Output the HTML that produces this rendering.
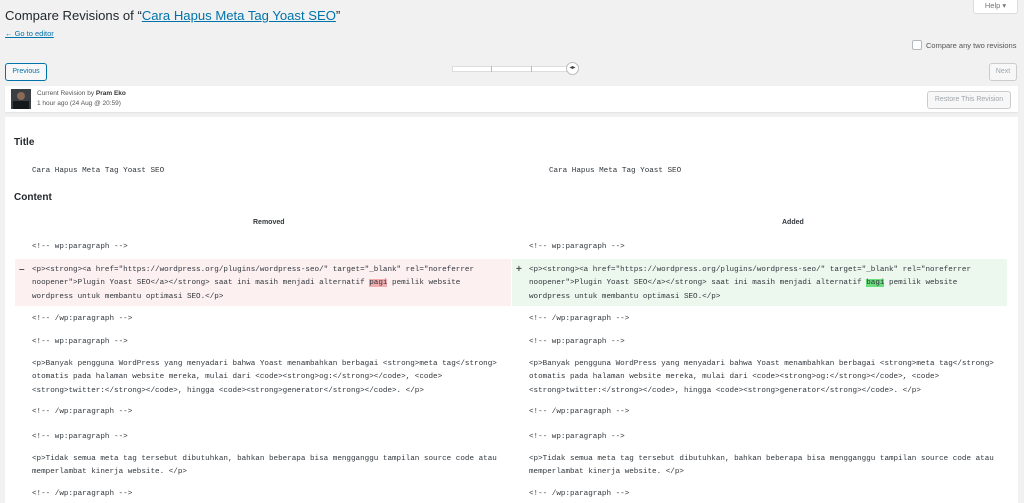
<!DOCTYPE html>
<html><head><meta charset="utf-8"><style>
*{margin:0;padding:0;box-sizing:border-box}
body{width:1024px;height:503px;overflow:hidden;background:#f1f1f1;font-family:"Liberation Sans",sans-serif;color:#23282d;position:relative}
.a{position:absolute;white-space:nowrap}
.btn{position:absolute;border:1px solid #ccc;background:#f7f7f7;border-radius:3px;font-size:7px;color:#a0a5aa;text-align:center}
.code{position:absolute;font-family:"Liberation Mono",monospace;font-size:7.6px;line-height:13.3px;color:#32373c;white-space:pre;margin-top:2px}
.del{background:#fcf0f1}
.ins{background:#ecf7ee}
.hd{background:#f1adad}
.hi{background:#68de7c}
</style></head><body>
<div class="a" style="left:5px;top:8px;font-size:13.1px;color:#23282d">Compare Revisions of “<span style="color:#0073aa;text-decoration:underline">Cara Hapus Meta Tag Yoast SEO</span>”</div>
<div class="a" style="left:5px;top:29px;font-size:7.5px;color:#0073aa;text-decoration:underline">← Go to editor</div>
<div class="a" style="left:973px;top:-2px;width:45px;height:16px;background:#fff;border:1px solid #ddd;border-top:none;border-radius:0 0 3px 3px;font-size:7.5px;color:#72777c;text-align:center;line-height:15px">Help ▾</div>
<div class="a" style="left:912px;top:40px;width:10px;height:10px;border:1px solid #b4b9be;border-radius:2px;background:#fff"></div>
<div class="a" style="left:926px;top:41px;font-size:7.5px;color:#555">Compare any two revisions</div>
<div class="btn" style="left:5px;top:63px;width:42px;height:18px;border-color:#0073aa;color:#0073aa;line-height:16px">Previous</div>
<div class="a" style="left:452px;top:66px;width:118px;height:6px;background:#fff;border:1px solid #ddd"></div>
<div class="a" style="left:491px;top:66px;width:1px;height:6px;background:#bbb"></div>
<div class="a" style="left:531px;top:66px;width:1px;height:6px;background:#bbb"></div>
<div class="a" style="left:566px;top:62px;width:13px;height:13px;border:1px solid #bbb;border-radius:50%;background:#fff;font-size:6px;line-height:11px;text-align:center;color:#444">◂▸</div>
<div class="btn" style="left:989px;top:63px;width:28px;height:18px;line-height:16px">Next</div>
<div class="a" style="left:5px;top:86px;width:1013px;height:26px;background:#fff;box-shadow:0 1px 1px rgba(0,0,0,.06)"></div>
<div class="a" style="left:11px;top:89px;width:20px;height:20px;background:#3a3f44"><div style="position:absolute;left:6px;top:3px;width:8px;height:8px;border-radius:50%;background:#8a6a58"></div><div style="position:absolute;left:2px;top:12px;width:16px;height:8px;background:#15181b"></div></div>
<div class="a" style="left:37px;top:90px;font-size:6.5px;color:#555">Current Revision by <b style="color:#333">Pram Eko</b></div>
<div class="a" style="left:37px;top:100px;font-size:6.5px;color:#555">1 hour ago (24 Aug @ 20:59)</div>
<div class="btn" style="left:927px;top:91px;width:84px;height:18px;line-height:16px">Restore This Revision</div>
<div class="a" style="left:5px;top:117px;width:1013px;height:386px;background:#fff"></div>
<div class="a" style="left:14px;top:137px;font-size:10px;font-weight:bold;color:#23282d">Title</div>
<div class="code" style="left:32px;top:163px">Cara Hapus Meta Tag Yoast SEO</div>
<div class="code" style="left:549px;top:163px">Cara Hapus Meta Tag Yoast SEO</div>
<div class="a" style="left:14px;top:192px;font-size:10px;font-weight:bold;color:#23282d">Content</div>
<div class="a" style="left:253px;top:219px;font-size:7px;font-weight:bold;color:#32373c">Removed</div>
<div class="a" style="left:782px;top:219px;font-size:7px;font-weight:bold;color:#32373c">Added</div>
<div class="del a" style="left:15px;top:259px;width:496px;height:47px"></div>
<div class="ins a" style="left:512px;top:259px;width:495px;height:47px"></div>
<div class="a" style="left:19px;top:264px;font-size:10px;font-weight:bold;color:#555">–</div>
<div class="a" style="left:516px;top:264px;font-size:10px;font-weight:bold;color:#555">+</div>
<div class="code" style="left:32px;top:239px">&lt;!-- wp:paragraph --&gt;</div>
<div class="code" style="left:529px;top:239px">&lt;!-- wp:paragraph --&gt;</div>
<div class="code" style="left:32px;top:262px">&lt;p&gt;&lt;strong&gt;&lt;a href="https://wordpress.org/plugins/wordpress-seo/" target="_blank" rel="noreferrer
noopener"&gt;Plugin Yoast SEO&lt;/a&gt;&lt;/strong&gt; saat ini masih menjadi alternatif <span class="hd">pagi</span> pemilik website
wordpress untuk membantu optimasi SEO.&lt;/p&gt;</div>
<div class="code" style="left:529px;top:262px">&lt;p&gt;&lt;strong&gt;&lt;a href="https://wordpress.org/plugins/wordpress-seo/" target="_blank" rel="noreferrer
noopener"&gt;Plugin Yoast SEO&lt;/a&gt;&lt;/strong&gt; saat ini masih menjadi alternatif <span class="hi">bagi</span> pemilik website
wordpress untuk membantu optimasi SEO.&lt;/p&gt;</div>
<div class="code" style="left:32px;top:311px">&lt;!-- /wp:paragraph --&gt;</div>
<div class="code" style="left:529px;top:311px">&lt;!-- /wp:paragraph --&gt;</div>
<div class="code" style="left:32px;top:334px">&lt;!-- wp:paragraph --&gt;</div>
<div class="code" style="left:529px;top:334px">&lt;!-- wp:paragraph --&gt;</div>
<div class="code" style="left:32px;top:356px">&lt;p&gt;Banyak pengguna WordPress yang menyadari bahwa Yoast menambahkan berbagai &lt;strong&gt;meta tag&lt;/strong&gt;
otomatis pada halaman website mereka, mulai dari &lt;code&gt;&lt;strong&gt;og:&lt;/strong&gt;&lt;/code&gt;, &lt;code&gt;
&lt;strong&gt;twitter:&lt;/strong&gt;&lt;/code&gt;, hingga &lt;code&gt;&lt;strong&gt;generator&lt;/strong&gt;&lt;/code&gt;. &lt;/p&gt;</div>
<div class="code" style="left:529px;top:356px">&lt;p&gt;Banyak pengguna WordPress yang menyadari bahwa Yoast menambahkan berbagai &lt;strong&gt;meta tag&lt;/strong&gt;
otomatis pada halaman website mereka, mulai dari &lt;code&gt;&lt;strong&gt;og:&lt;/strong&gt;&lt;/code&gt;, &lt;code&gt;
&lt;strong&gt;twitter:&lt;/strong&gt;&lt;/code&gt;, hingga &lt;code&gt;&lt;strong&gt;generator&lt;/strong&gt;&lt;/code&gt;. &lt;/p&gt;</div>
<div class="code" style="left:32px;top:404px">&lt;!-- /wp:paragraph --&gt;</div>
<div class="code" style="left:529px;top:404px">&lt;!-- /wp:paragraph --&gt;</div>
<div class="code" style="left:32px;top:429px">&lt;!-- wp:paragraph --&gt;</div>
<div class="code" style="left:529px;top:429px">&lt;!-- wp:paragraph --&gt;</div>
<div class="code" style="left:32px;top:451px">&lt;p&gt;Tidak semua meta tag tersebut dibutuhkan, bahkan beberapa bisa mengganggu tampilan source code atau
memperlambat kinerja website. &lt;/p&gt;</div>
<div class="code" style="left:529px;top:451px">&lt;p&gt;Tidak semua meta tag tersebut dibutuhkan, bahkan beberapa bisa mengganggu tampilan source code atau
memperlambat kinerja website. &lt;/p&gt;</div>
<div class="code" style="left:32px;top:486px">&lt;!-- /wp:paragraph --&gt;</div>
<div class="code" style="left:529px;top:486px">&lt;!-- /wp:paragraph --&gt;</div>
</body></html>
